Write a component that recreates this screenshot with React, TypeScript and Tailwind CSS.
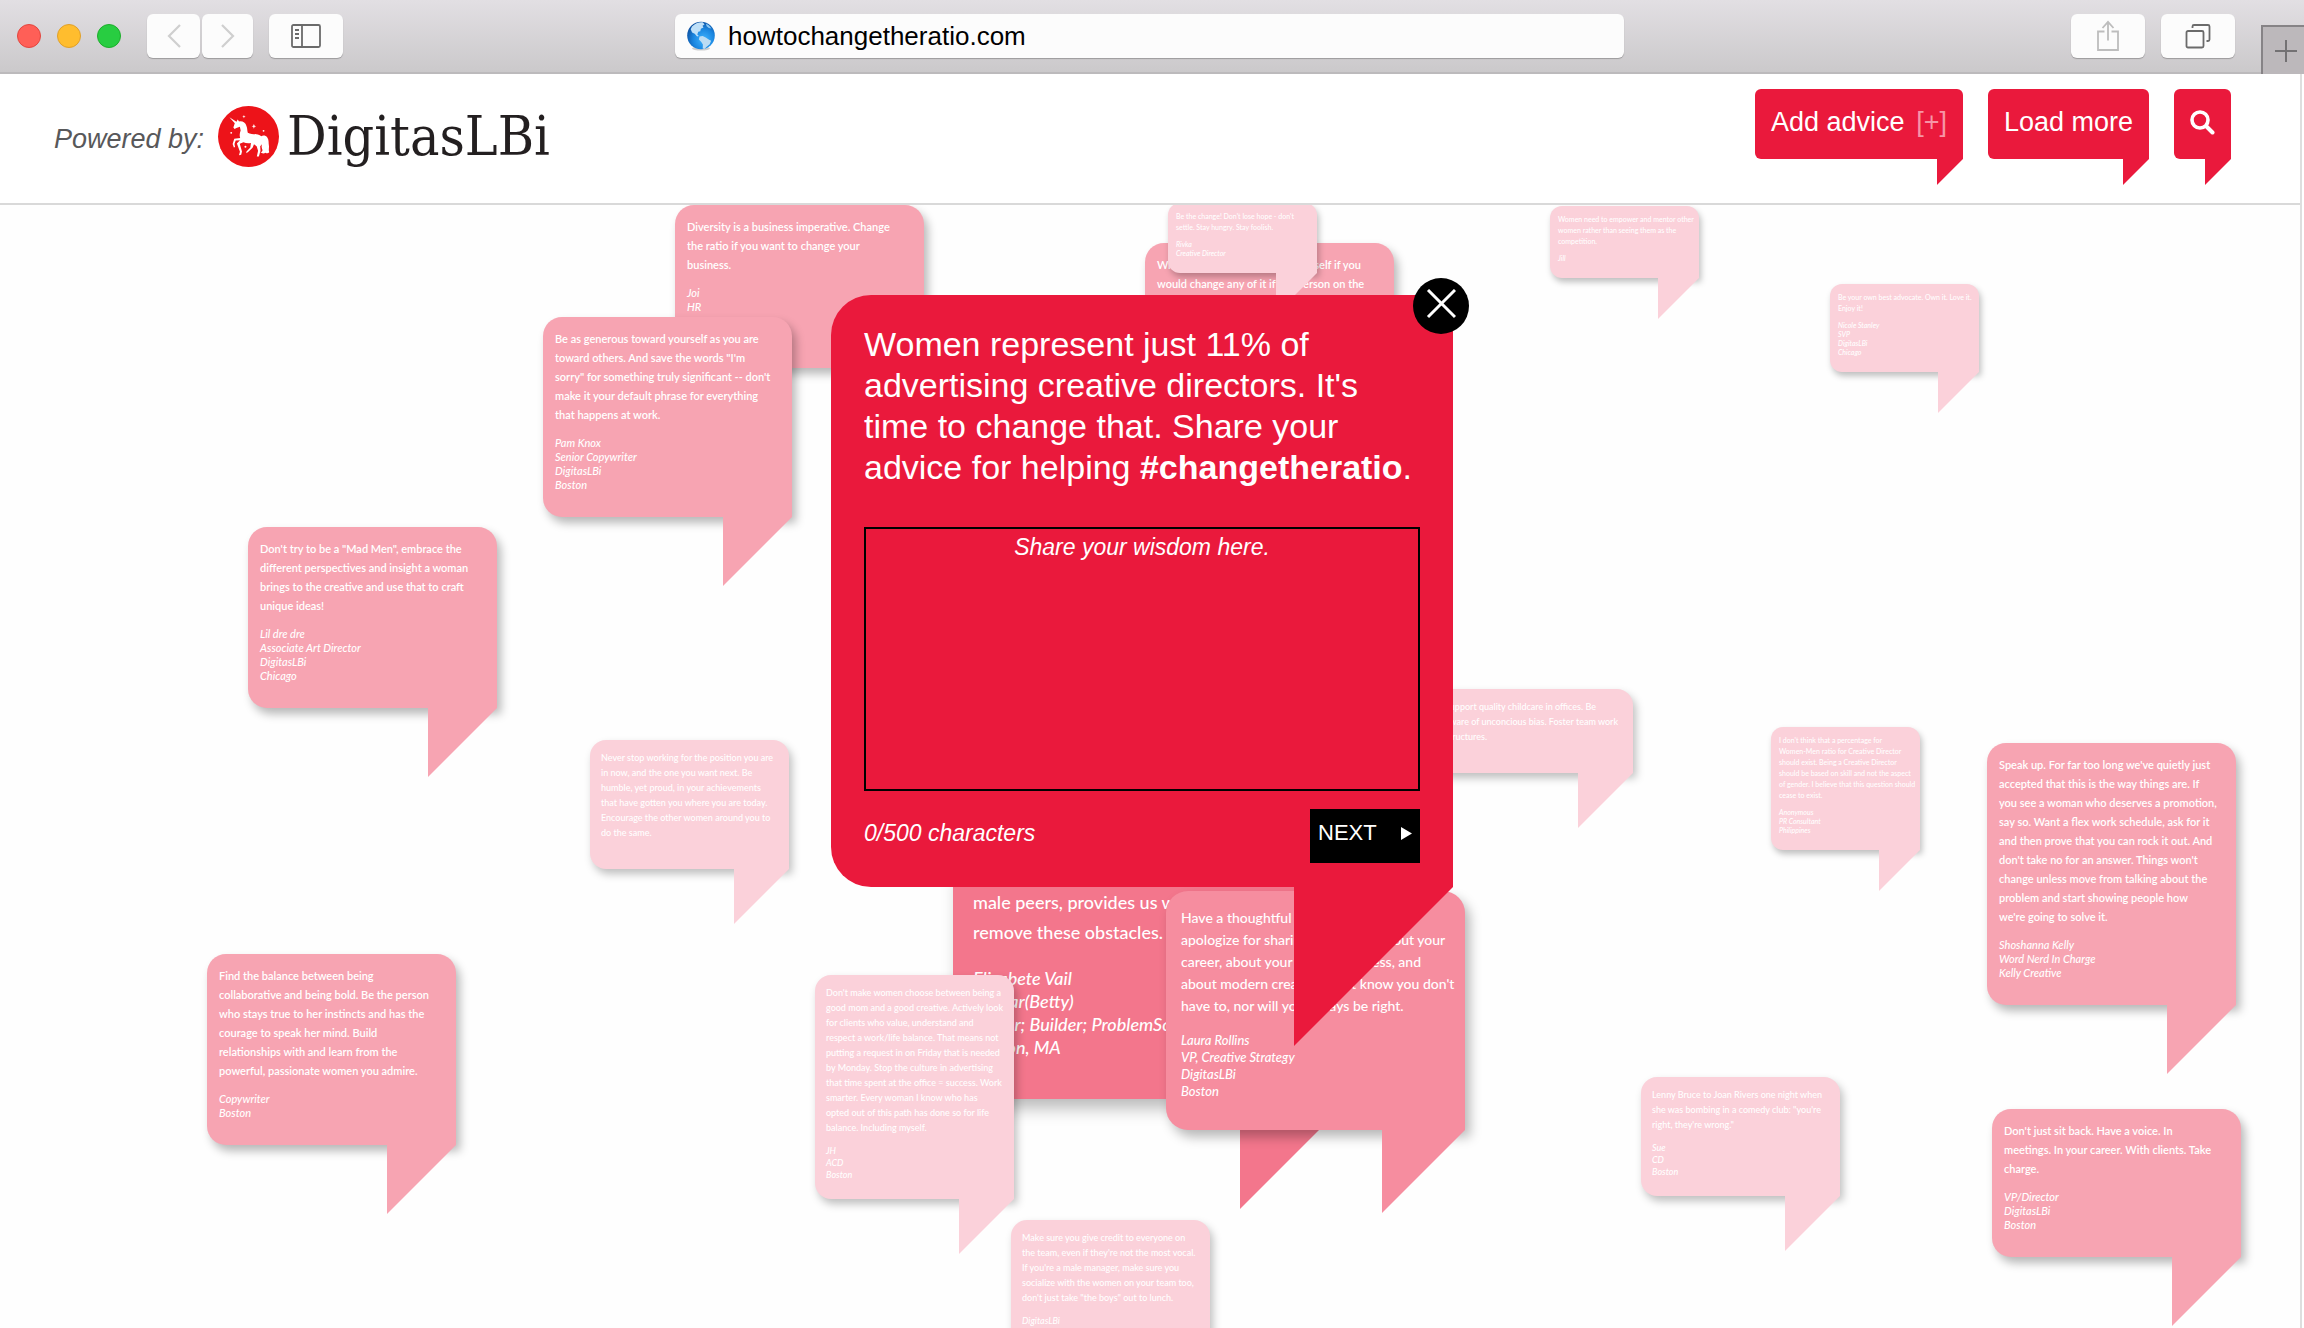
import React from "react";

type Size = "xs" | "sm" | "md" | "lg" | "xl";

type Note = {
  x: number;
  y: number;
  size: Size;
  lines: string[];
  by: string[];
  minHeight?: number;
};

const sizes: Record<Size, { body: string; text: string; by: string; tail: string }> = {
  xs: {
    body: "w-[149px] gap-[7px] rounded-xl rounded-br-none bg-[#fbd1da] px-2 pt-2 pb-[15px] shadow-[2px_4px_6px_rgba(0,0,0,0.25)]",
    text: "text-[7px] leading-[11px]",
    by: "text-[7px] leading-[9px]",
    tail: "size-[41px] bg-[#fbd1da]",
  },
  sm: {
    body: "w-[199px] gap-[10px] rounded-2xl rounded-br-none bg-[#fbd1da] px-[11px] pt-[10px] pb-[18px] shadow-[3px_5px_8px_rgba(0,0,0,0.25)]",
    text: "text-[9px] leading-[15px]",
    by: "text-[9px] leading-[12px]",
    tail: "size-[55px] bg-[#fbd1da]",
  },
  md: {
    body: "w-[249px] gap-3 rounded-[19px] rounded-br-none bg-[#f7a4b2] px-3 pt-3 pb-[25px] shadow-[4px_6px_10px_rgba(0,0,0,0.28)]",
    text: "text-[11px] leading-[19px] font-semibold",
    by: "text-[11px] leading-[14px]",
    tail: "size-[69px] bg-[#f7a4b2]",
  },
  lg: {
    body: "w-[299px] gap-[15px] rounded-[22px] rounded-br-none bg-[#f68d9f] px-[15px] pt-4 pb-[30px] shadow-[5px_7px_12px_rgba(0,0,0,0.28)]",
    text: "text-[14px] leading-[22px]",
    by: "text-[13px] leading-[17px]",
    tail: "size-[83px] bg-[#f68d9f]",
  },
  xl: {
    body: "w-[397px] gap-5 rounded-none bg-[#f3768c] px-5 pt-5 pb-[40px] shadow-[6px_9px_16px_rgba(0,0,0,0.28)]",
    text: "text-[18px] leading-[30px]",
    by: "text-[18px] leading-[23px]",
    tail: "size-[110px] bg-[#f3768c]",
  },
};

const notes: Note[] = [
  { x: 675, y: 0, size: "md", minHeight: 163, lines: ["Diversity is a business imperative. Change", "the ratio if you want to change your", "business."], by: ["Joi", "HR"] },
  { x: 543, y: 112, size: "md", lines: ["Be as generous toward yourself as you are", "toward others. And save the words \"I'm", "sorry\" for something truly significant -- don't", "make it your default phrase for everything", "that happens at work."], by: ["Pam Knox", "Senior Copywriter", "DigitasLBi", "Boston"] },
  { x: 248, y: 322, size: "md", lines: ["Don't try to be a \"Mad Men\", embrace the", "different perspectives and insight a woman", "brings to the creative and use that to craft", "unique ideas!"], by: ["Lil dre dre", "Associate Art Director", "DigitasLBi", "Chicago"] },
  { x: 207, y: 749, size: "md", lines: ["Find the balance between being", "collaborative and being bold. Be the person", "who stays true to her instincts and has the", "courage to speak her mind. Build", "relationships with and learn from the", "powerful, passionate women you admire."], by: ["Copywriter", "Boston"] },
  { x: 1145, y: 38, size: "md", minHeight: 163, lines: ["Write down your goals. Ask yourself if you", "would change any of it if the person on the"], by: [] },
  { x: 1168, y: -2, size: "xs", lines: ["Be the change! Don't lose hope - don't", "settle. Stay hungry. Stay foolish."], by: ["Rivka", "Creative Director"] },
  { x: 1550, y: 1, size: "xs", lines: ["Women need to empower and mentor other", "women rather than seeing them as the", "competition."], by: ["Jill"] },
  { x: 1830, y: 79, size: "xs", lines: ["Be your own best advocate. Own it. Love it.", "Enjoy it!"], by: ["Nicole Stanley", "SVP", "DigitasLBi", "Chicago"] },
  { x: 1434, y: 484, size: "sm", minHeight: 84, lines: ["Support quality childcare in offices. Be", "aware of unconcious bias. Foster team work", "structures."], by: [] },
  { x: 1771, y: 522, size: "xs", lines: ["I don't think that a percentage for", "Women-Men ratio for Creative Director", "should exist. Being a Creative Director", "should be based on skill and not the aspect", "of gender. I believe that this question should", "cease to exist."], by: ["Anonymous", "PR Consultant", "Philippines"] },
  { x: 1987, y: 538, size: "md", lines: ["Speak up. For far too long we've quietly just", "accepted that this is the way things are. If", "you see a woman who deserves a promotion,", "say so. Want a flex work schedule, ask for it", "and then prove that you can rock it out. And", "don't take no for an answer. Things won't", "change unless move from talking about the", "problem and start showing people how", "we're going to solve it."], by: ["Shoshanna Kelly", "Word Nerd In Charge", "Kelly Creative"] },
  { x: 1992, y: 904, size: "md", lines: ["Don't just sit back. Have a voice. In", "meetings. In your career. With clients. Take", "charge."], by: ["VP/Director", "DigitasLBi", "Boston"] },
  { x: 1641, y: 872, size: "sm", lines: ["Lenny Bruce to Joan Rivers one night when", "she was bombing in a comedy club: \"you're", "right, they're wrong.\""], by: ["Sue", "CD", "Boston"] },
  { x: 590, y: 535, size: "sm", minHeight: 129, lines: ["Never stop working for the position you are", "in now, and the one you want next. Be", "humble, yet proud, in your achievements", "that have gotten you where you are today.", "Encourage the other women around you to", "do the same."], by: [] },
  { x: 953, y: 662, size: "xl", lines: ["male peers, provides us with tools to", "remove these obstacles."], by: ["Elizabete Vail", "Caesar(Betty)", "Maker; Builder; ProblemSolver", "Boston, MA"] },
  { x: 1166, y: 686, size: "lg", lines: ["Have a thoughtful point of view. Don't", "apologize for sharing your ideas about your", "career, about your team's business, and", "about modern creativity, but know you don't", "have to, nor will you always be right."], by: ["Laura Rollins", "VP, Creative Strategy", "DigitasLBi", "Boston"] },
  { x: 815, y: 770, size: "sm", lines: ["Don't make women choose between being a", "good mom and a good creative. Actively look", "for clients who value, understand and", "respect a work/life balance. That means not", "putting a request in on Friday that is needed", "by Monday. Stop the culture in advertising", "that time spent at the office = success. Work", "smarter. Every woman I know who has", "opted out of this path has done so for life", "balance. Including myself."], by: ["JH", "ACD", "Boston"] },
  { x: 1011, y: 1015, size: "sm", lines: ["Make sure you give credit to everyone on", "the team, even if they're not the most vocal.", "If you're a male manager, make sure you", "socialize with the women on your team too,", "don't just take \"the boys\" out to lunch."], by: ["DigitasLBi", "Boston"] },
];

function NoteBubble({ note }: { note: Note }) {
  const s = sizes[note.size];
  return (
    <article
      className="absolute flex flex-col items-end font-['Lato',sans-serif] font-medium whitespace-nowrap text-white"
      style={{ left: note.x, top: note.y }}
    >
      <div className={`flex flex-col ${s.body}`} style={{ minHeight: note.minHeight }}>
        <p className={s.text}>
          {note.lines.map((line) => (
            <span key={line} className="block">{line}</span>
          ))}
        </p>
        {note.by.length > 0 && (
          <p className={`italic ${s.by}`}>
            {note.by.map((line) => (
              <span key={line} className="block">{line}</span>
            ))}
          </p>
        )}
      </div>
      <div className={`relative [clip-path:polygon(0_0,100%_0,0_100%)] ${s.tail}`} />
    </article>
  );
}

function Globe() {
  return (
    <svg viewBox="0 0 30 30" className="size-[30px]" aria-hidden="true">
      <defs>
        <radialGradient id="sea" cx="0.6" cy="0.65" r="0.7">
          <stop offset="0" stopColor="#3fb4ff" />
          <stop offset="0.55" stopColor="#1a86e0" />
          <stop offset="1" stopColor="#0b4a9a" />
        </radialGradient>
      </defs>
      <ellipse cx="15" cy="27.5" rx="9" ry="2" fill="#000" opacity="0.18" />
      <circle cx="15" cy="14.5" r="13.8" fill="url(#sea)" />
      <path d="M6 5.5C9 2.5 13 1 17 1.4l1.5 2-2 1.4 1 1.6-2.6 1.4-.6 2.4-2 .6-1 2.6 1.6 1.6-1.8.4-2.4-2.6-2.6-1.2-1.4-3.4z" fill="#bfe0f8" />
      <path d="M13.5 15.6l3.2-.6 3 1.4 3 2 2.4 1.4-1.4 3.4-3 2.6-2.2 2.1-1.8-.3.2-4-1.6-2.6-2.4-2.6z" fill="#bcdcf3" />
      <path d="M20 2.6l3 1.8 2.4 3-2.6-.4-2.2-1.8z" fill="#8cc8f2" />
    </svg>
  );
}

function UnicornMark() {
  return (
    <svg viewBox="0 0 60 60" className="size-[61px]" aria-hidden="true">
      <circle cx="30" cy="30" r="30" fill="#ed1319" />
      <g fill="#fff">
        <path d="M11.2 11l7 4.4 1.2-2 1.3 1.8c3.8-.5 6.2 1.2 7.2 4.2 1.2 2.6.7 4.8 1.4 6.8 2.4 1.4 5.4 1.4 8.4 1.6 2.2.2 3.6.8 4.8 2 1.8-1.2 4.6-.8 6 1.2 1.8 2.6 1 5.4 1.6 8 .3 2.4-.6 4.2.3 6.4-1 1.4-2.6 1.2-3.6.5-1.6 1.2-3.8 1-5-.6 1.6-.2 2.2-1.2 1.8-2.6-1.2-2.4-.8-5 .5-7.6-.3 2.2-1.4 3.2-2.6 4.4l.3 4.6-1.6 5.6h-2l1.2-5.6-1.4-4.4-2.6-2-1.4 3.4-4.4 4.2-1.8 1.2.2-1.8 3.8-4 .6-4.4c-2.4.5-5.2.2-7.4-.6l-3.6 1.4 2.2 7.6-.8 3.2-2.2.5 1-3.4-3-8.2 3-3.2-4.2.4-1.2 3.4.6 3-1.2.4-1.2-3.4 1.6-5.2 5.8-.8c-.8-2.4-.5-5 .5-7.4l-.8-3.6-3.4 1.2-1.8 1-1.2-1.4 1.4-4.2z" />
        <path d="M25.5 8.8l.5 1.2 1.2.3-1.2.5-.5 1.2-.5-1.2-1.2-.5 1.2-.3z" />
        <path d="M35.3 17.6l.7 1.8 1.6.5-1.6.6-.7 1.8-.7-1.8-1.6-.6 1.6-.5z" />
        <circle cx="44.8" cy="24.4" r="0.9" />
        <circle cx="13" cy="26.4" r="0.9" />
        <circle cx="27" cy="40" r="1" />
      </g>
    </svg>
  );
}

const toolButton =
  "flex h-11 items-center justify-center rounded-md bg-[#fcfcfc] shadow-[0_1px_1px_rgba(0,0,0,0.25)]";

function BrowserBar() {
  return (
    <div className="flex h-[74px] shrink-0 items-center border-b-2 border-[#bcbabc] bg-linear-to-b from-[#e2dfe3] to-[#cbc9cb] pl-[17px]">
      <div className="flex gap-4">
        <span className="size-6 rounded-full border border-[#e2463f] bg-[#ff5f57]" />
        <span className="size-6 rounded-full border border-[#e0a02a] bg-[#ffbd2e]" />
        <span className="size-6 rounded-full border border-[#1dad2b] bg-[#28cd41]" />
      </div>
      <div className="ml-[26px] flex gap-0.5">
        <button type="button" aria-label="Back" className={`${toolButton} w-[53px]`}>
          <svg viewBox="0 0 16 24" className="h-6 w-4" fill="none" stroke="#cfcfcf" strokeWidth="2.2"><path d="M14 1L3 12l11 11" /></svg>
        </button>
        <button type="button" aria-label="Forward" className={`${toolButton} w-[51px]`}>
          <svg viewBox="0 0 16 24" className="h-6 w-4" fill="none" stroke="#cfcfcf" strokeWidth="2.2"><path d="M2 1l11 11L2 23" /></svg>
        </button>
      </div>
      <button type="button" aria-label="Sidebar" className={`${toolButton} ml-4 w-[74px]`}>
        <svg viewBox="0 0 30 24" className="h-6 w-[30px]" fill="none" stroke="#6b6b6b" strokeWidth="1.8">
          <rect x="1" y="1" width="28" height="22" rx="1.5" />
          <path d="M11 1v22M4 6h4M4 10h4M4 14h4" />
        </svg>
      </button>
      <label className={`${toolButton} mr-[447px] ml-[332px] min-w-0 flex-1 gap-3 pl-[11px]`}>
        <Globe />
        <input
          aria-label="Address"
          defaultValue="howtochangetheratio.com"
          className="min-w-0 flex-1 bg-transparent text-[26px] leading-8 text-black outline-none"
        />
      </label>
      <div className="flex gap-4">
        <button type="button" aria-label="Share" className={`${toolButton} w-[74px]`}>
          <svg viewBox="0 0 24 32" className="h-8 w-6" fill="none" stroke="#bdbdbd" strokeWidth="1.8">
            <path d="M8.500 11.500H2v18.500h20V11.500h-6.500M12 20.500V2M6.500 8L12 1.800 17.500 8" />
          </svg>
        </button>
        <button type="button" aria-label="Show tabs" className={`${toolButton} w-[74px]`}>
          <svg viewBox="0 0 26 26" className="size-[26px]" fill="none" stroke="#6b6b6b" strokeWidth="1.8">
            <rect x="1.500" y="8" width="17" height="16.500" rx="1.500" />
            <path d="M7.500 5V3.500A1.500 1.500 0 0 1 9 2h14a1.500 1.500 0 0 1 1.500 1.500v13A1.500 1.500 0 0 1 23 18h-1.500" />
          </svg>
        </button>
      </div>
      <button
        type="button"
        aria-label="New tab"
        className="-mb-0.5 ml-[26px] flex h-[49px] w-[43px] items-center justify-center self-end border-t-2 border-l-2 border-[#868386] bg-[#bcb8bb] pl-1"
      >
        <svg viewBox="0 0 22 22" className="size-[22px]" stroke="#737173" strokeWidth="2"><path d="M11 0v22M0 11h22" /></svg>
      </button>
    </div>
  );
}

function HeaderButton({ label, children }: { label?: string; children: React.ReactNode }) {
  return (
    <button type="button" aria-label={label} className="flex flex-col items-end">
      <span className="flex h-[70px] w-full items-center rounded-md rounded-br-none bg-[#ea193c] px-4 pb-1 text-[27px] leading-8 whitespace-nowrap text-white">
        {children}
      </span>
      <span className="size-[26px] bg-[#ea193c] [clip-path:polygon(0_0,100%_0,0_100%)]" />
    </button>
  );
}

function SiteHeader() {
  return (
    <header className="flex h-[131px] shrink-0 items-start justify-between border-b-2 border-[#d9d9d9] bg-white pr-[69px] pl-[54px]">
      <div className="flex items-center pt-[27px]">
        <span className="pt-1.5 text-[27px] leading-8 text-[#58585a] italic">Powered by:</span>
        <a href="#digitaslbi" aria-label="DigitasLBi" className="ml-3.5 flex items-center gap-2">
          <UnicornMark />
          <span className="font-['DejaVu_Serif_Condensed','DejaVu_Serif',serif] text-[55px] leading-[70px] text-[#231f20]">DigitasLBi</span>
        </a>
      </div>
      <nav className="flex gap-[25px] pt-[15px]">
        <HeaderButton>
          Add advice&nbsp;<span className="ml-1 text-[#f795a6]">[+]</span>
        </HeaderButton>
        <HeaderButton>Load more</HeaderButton>
        <HeaderButton label="Search">
          <svg viewBox="0 0 25 25" className="size-[25px]" fill="none" stroke="#fff" strokeLinecap="round">
            <circle cx="10" cy="10" r="8" strokeWidth="3.600" />
            <path d="M16.500 16.500l6 6" strokeWidth="4" />
          </svg>
        </HeaderButton>
      </nav>
    </header>
  );
}

function AdviceDialog() {
  return (
    <div className="absolute inset-x-0 top-[90px] flex justify-center pr-4">
      <form role="dialog" aria-label="Share your advice" className="relative flex flex-col items-end">
        <div className="flex w-[622px] flex-col rounded-l-[40px] bg-[#ea193c] px-[33px] pt-[29px] pb-6 text-white">
          <p className="text-[34px] leading-[41px] whitespace-nowrap">
            Women represent just 11% of
            <br />
            advertising creative directors. It's
            <br />
            time to change that. Share your
            <br />
            advice for helping <strong className="font-bold">#changetheratio</strong>.
          </p>
          <textarea
            aria-label="Your advice"
            placeholder="Share your wisdom here."
            className="mt-[39px] block h-[264px] w-full resize-none border-2 border-black bg-transparent pt-0.5 text-center text-[23px] leading-8 text-white italic outline-none placeholder:text-white"
          />
          <div className="mt-[18px] flex items-center justify-between">
            <span className="pb-1.5 text-[23px] leading-8 italic">0/500 characters</span>
            <button type="button" className="flex h-[54px] w-[110px] items-center justify-between bg-black px-2 pb-1.5 text-[22px] leading-8">
              NEXT
              <svg viewBox="0 0 11 13" className="h-[13px] w-[11px]" fill="#fff"><path d="M0 0l11 6.500L0 13z" /></svg>
            </button>
          </div>
        </div>
        <div className="size-[159px] bg-[#ea193c] [clip-path:polygon(0_0,100%_0,0_100%)]" />
        <button
          type="button"
          aria-label="Close"
          className="absolute -top-[17px] -right-4 flex size-14 items-center justify-center rounded-full bg-black pb-1"
        >
          <svg viewBox="0 0 30 30" className="size-[30px]" stroke="#fff" strokeWidth="3"><path d="M2 1l27 27M29 1L2 28" /></svg>
        </button>
      </form>
    </div>
  );
}

export default function App() {
  return (
    <div className="flex h-screen flex-col overflow-hidden bg-white font-['Liberation_Sans',Arial,sans-serif]">
      <BrowserBar />
      <div className="mr-0.5 flex min-h-0 flex-1 flex-col border-r-2 border-[#dedede]">
        <SiteHeader />
        <main className="relative min-h-0 flex-1 overflow-hidden bg-[#fefefe]">
          {notes.map((note) => (
            <NoteBubble key={note.lines[0]} note={note} />
          ))}
          <AdviceDialog />
        </main>
      </div>
    </div>
  );
}
